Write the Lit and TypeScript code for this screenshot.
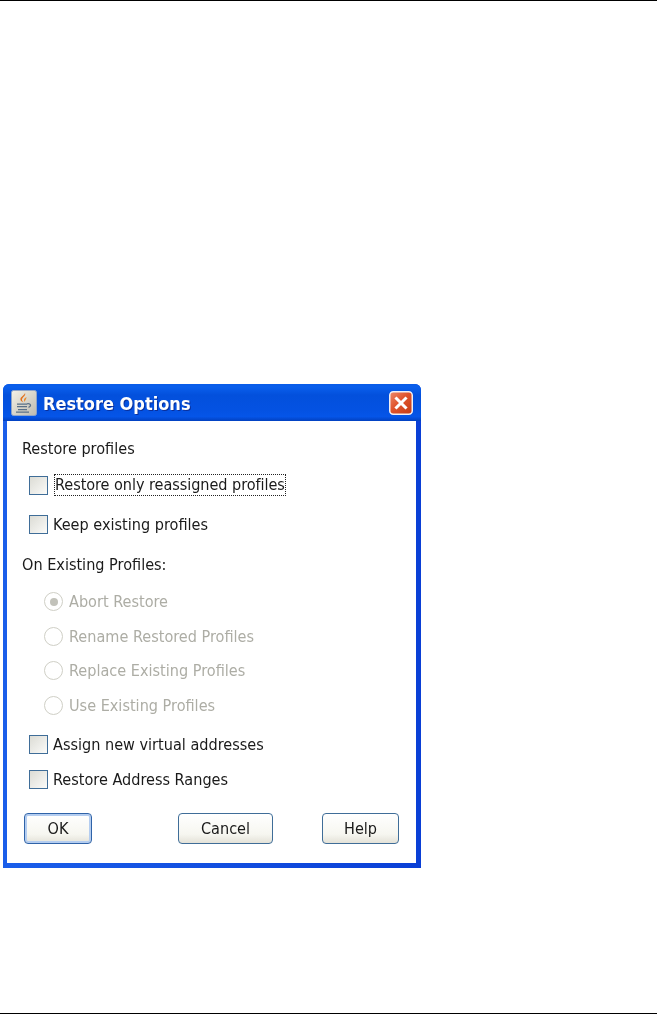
import { LitElement, html, css, svg } from "lit";
import { customElement } from "lit/decorators.js";

@customElement("app-root")
export class AppRoot extends LitElement {
  static styles = css`
    :host { display: block; width: 657px; height: 1014px; background: #fff; font-family: "DejaVu Sans", "Noto Sans", sans-serif; font-stretch: condensed; font-size: 16.1px; color: #1a1a1a; overflow: hidden; }
    .page { height: 1014px; box-sizing: border-box; display: flex; flex-direction: column; border-top: 1px solid #000; border-bottom: 1px solid #000; padding-bottom: 1px; }
    .dialog { margin: 383px 0 0 3px; width: 418px; height: 484px; box-sizing: border-box; display: flex; flex-direction: column; border-radius: 6px 6px 0 0; overflow: hidden; background: linear-gradient(90deg, #1a5eea 0, #0a3fd6 100%); filter: blur(0.4px); }
    .title { height: 37px; flex: none; display: flex; align-items: center; padding: 0 8px 0 8px; gap: 5px; background: linear-gradient(180deg, #0a5ce8 0%, #0a5fec 8%, #0350dc 30%, #0452e2 70%, #0555e8 88%, #0241c0 100%); }
    .app-icon { width: 26px; height: 26px; flex: none; }
    .title-text { flex: 1; color: #fff; font-weight: 700; font-size: 18px; padding: 1px 0 0 1px; text-shadow: 1px 1px 0 #0a2f9a; }
    .close { width: 24px; height: 24px; flex: none; display: block; }
    .client { flex: 1; margin: 0 5px 5px 4px; background: #fff; padding-left: 15px; padding-top: 17px; display: flex; flex-direction: column; }
    .row { height: 20px; display: flex; align-items: center; white-space: nowrap; }
    .indent { margin-left: 7px; }
    .cb { width: 19px; height: 19px; box-sizing: border-box; flex: none; align-self: flex-end; border: 1.5px solid #3f6d98; background: linear-gradient(135deg, #dcdcd5 0%, #eeeeea 60%, #fbfbf9 100%); margin-right: 5px; }
    .focus { outline: 1px dotted #222; margin-left: 2px; line-height: 20px; height: 20px; letter-spacing: -0.05px; }
    .rb { width: 19px; height: 19px; box-sizing: border-box; flex: none; align-self: flex-end; border: 1.5px solid #cfcfc6; border-radius: 50%; background: #fff; display: flex; align-items: center; justify-content: center; margin-right: 6px; margin-left: 22px; }
    .rb i { width: 8px; height: 8px; border-radius: 50%; background: #c2c2ba; display: block; }
    .dis { color: #adada5; }
    .mt17 { margin-top: 17px; } .mt19 { margin-top: 19px; } .mt20 { margin-top: 20px; }
    .mt15 { margin-top: 15px; } .mt14 { margin-top: 14px; }
    .buttons { margin-top: 24px; margin-left: 2px; display: flex; height: 31px; }
    .btn { height: 31px; box-sizing: border-box; display: flex; align-items: center; justify-content: center; border: 1.5px solid #3f6d98; border-radius: 4px; background: linear-gradient(180deg, #fff 0%, #f6f6f0 70%, #e4e2d8 100%); }
    .ok { width: 68px; border-color: #2f63a8; box-shadow: inset 0 0 0 2px #b4cdf0; }
    .cancel { width: 95px; margin-left: 86px; }
    .help { width: 77px; margin-left: 49px; }
  `;

  private javaIcon() {
    return svg`<svg class="app-icon" viewBox="0 0 26 26">
      <defs><linearGradient id="jg" x1="0" y1="0" x2="1" y2="1"><stop offset="0" stop-color="#f4f1e6"/><stop offset="1" stop-color="#bdbab0"/></linearGradient></defs>
      <rect x="0.5" y="0.5" width="25" height="25" rx="2" fill="url(#jg)" stroke="#8fa4c8"/>
      <path d="M14 3c1.500 2.500-3.500 4.500-3 7 .2 1 1 2 1.500 2.500-2.500-1-4-3-2.500-5 1.200-1.600 3.800-2.600 4-4.500z" fill="#e2701c"/>
      <path d="M15.500 7c-1.500 1-3 2-2.500 3.500.2.700.6 1.200.8 1.600-.2-1.500 1.600-2.600 1.700-5.100z" fill="#ea8a30"/>
      <path d="M6 13.500h10v1.300H6zM6 16h10v1.300H6zM7 19h9v1.300H7zM5 21.500h13v1.300H5z" fill="#5a7088"/>
      <path d="M16 13.800c3.500-1 5 2.500 1.500 3.500" fill="none" stroke="#5a7088" stroke-width="1.300"/>
    </svg>`;
  }

  private closeIcon() {
    return svg`<svg class="close" viewBox="0 0 24 24">
      <defs><linearGradient id="cg" x1="0" y1="0" x2="1" y2="1"><stop offset="0" stop-color="#ec8a6c"/><stop offset="0.45" stop-color="#e0542c"/><stop offset="1" stop-color="#c43a14"/></linearGradient></defs>
      <rect x="0.750" y="0.750" width="22.500" height="22.500" rx="3.500" fill="url(#cg)" stroke="#f2f0f4" stroke-width="1.500"/>
      <path d="M7.500 7.500l9 9M16.500 7.500l-9 9" stroke="#fff" stroke-width="3" stroke-linecap="square"/>
    </svg>`;
  }

  render() {
    return html`
      <div class="page">
        <div class="dialog">
          <div class="title">
            ${this.javaIcon()}
            <span class="title-text">Restore Options</span>
            ${this.closeIcon()}
          </div>
          <div class="client">
            <div class="row">Restore profiles</div>
            <div class="row indent mt17"><span class="cb"></span><span class="focus">Restore only reassigned profiles</span></div>
            <div class="row indent mt19"><span class="cb"></span><span>Keep existing profiles</span></div>
            <div class="row mt20">On Existing Profiles:</div>
            <div class="row mt17"><span class="rb"><i></i></span><span class="dis">Abort Restore</span></div>
            <div class="row mt15"><span class="rb"></span><span class="dis">Rename Restored Profiles</span></div>
            <div class="row mt14"><span class="rb"></span><span class="dis">Replace Existing Profiles</span></div>
            <div class="row mt15"><span class="rb"></span><span class="dis">Use Existing Profiles</span></div>
            <div class="row indent mt19"><span class="cb"></span><span>Assign new virtual addresses</span></div>
            <div class="row indent mt15"><span class="cb"></span><span>Restore Address Ranges</span></div>
            <div class="buttons">
              <div class="btn ok">OK</div>
              <div class="btn cancel">Cancel</div>
              <div class="btn help">Help</div>
            </div>
          </div>
        </div>
      </div>
    `;
  }
}
